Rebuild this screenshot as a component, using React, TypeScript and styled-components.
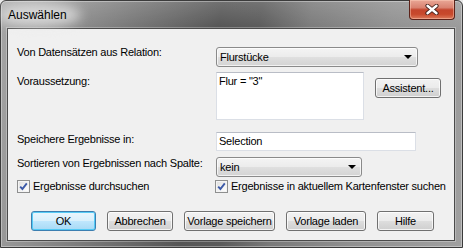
import React from "react";
import styled, { createGlobalStyle } from "styled-components";

const GlobalStyle = createGlobalStyle`
  html, body {
    margin: 0;
    padding: 0;
    background: #e8e8e8;
  }
  * {
    box-sizing: border-box;
  }
`;

const Window = styled.div`
  width: 463px;
  height: 248px;
  display: flex;
  flex-direction: column;
  padding: 0 7px 6px 6px;
  border: 1px solid #3b3b3b;
  border-radius: 6px 6px 0 0;
  background:
    linear-gradient(180deg, rgba(255, 255, 255, 0.16) 0, rgba(255, 255, 255, 0) 28px),
    linear-gradient(100deg, #a6a6a6 0%, #8f8f8f 14%, #707070 30%, #555 44%, #5a5a5a 52%, #7a7a7a 62%, #909090 78%, #a0a0a0 100%);
  box-shadow: inset 0 0 0 1px rgba(255, 255, 255, 0.35);
  font-family: "Liberation Sans", Arial, sans-serif;
  font-size: 11px;
  letter-spacing: -0.22px;
  color: #000;
`;

const TitleBar = styled.div`
  height: 27px;
  display: flex;
  align-items: center;
  justify-content: space-between;
`;

const Title = styled.span`
  position: relative;
  margin-left: 1px;
  font-size: 12px;
  line-height: 14px;
  letter-spacing: 0;
  color: #000;

  &::before {
    content: "";
    position: absolute;
    left: -10px;
    right: -14px;
    top: -5px;
    bottom: -5px;
    border-radius: 50%;
    background: rgba(235, 235, 235, 0.7);
    filter: blur(6px);
    z-index: 0;
  }

  span {
    position: relative;
  }
`;

const CloseButton = styled.div`
  align-self: flex-start;
  margin-top: -1px;
  width: 46px;
  height: 20px;
  display: flex;
  align-items: center;
  justify-content: center;
  border: 1px solid #5c2219;
  border-top: none;
  border-radius: 0 0 4px 4px;
  background: linear-gradient(180deg, #e9a796 0%, #d98270 40%, #c4452c 52%, #c8492c 75%, #dc7a5c 100%);
  box-shadow: inset 0 0 0 1px rgba(255, 210, 190, 0.45);
`;

const Client = styled.div`
  flex: 1;
  display: flex;
  flex-direction: column;
  padding: 18px 0 0 9px;
  background: #f0f0f0;
  border: 1px solid #4a4a4a;
  box-shadow: 0 0 0 1px rgba(255, 255, 255, 0.28);
`;

const Row = styled.div<{ $top: number }>`
  display: grid;
  grid-template-columns: 199px auto;
  align-items: start;
  margin-top: ${(p) => p.$top}px;
`;

const Label = styled.div<{ $offset: number }>`
  line-height: 13px;
  margin-top: ${(p) => p.$offset}px;
  white-space: nowrap;
`;

const Combo = styled.div<{ $width: number }>`
  position: relative;
  width: ${(p) => p.$width}px;
  height: 20px;
  display: flex;
  align-items: center;
  padding-left: 3px;
  border: 1px solid #8a8a8a;
  border-radius: 3px;
  background: linear-gradient(180deg, #f4f4f4 0%, #ececec 48%, #dfdfdf 52%, #d3d3d3 100%);
  box-shadow: inset 0 0 0 1px rgba(255, 255, 255, 0.7);
  line-height: 13px;
`;

const ComboArrow = styled.span`
  position: absolute;
  right: 5px;
  top: 7px;
  width: 0;
  height: 0;
  border-left: 4px solid transparent;
  border-right: 4px solid transparent;
  border-top: 4px solid #000;
`;

const FieldGroup = styled.div`
  display: flex;
  align-items: flex-start;
  gap: 11px;
`;

const TextArea = styled.div`
  width: 148px;
  height: 48px;
  padding: 2px 2px;
  background: #fff;
  border: 1px solid #dbdfe6;
  border-top-color: #b9bdc6;
  line-height: 13px;
`;

const TextBox = styled.div`
  width: 200px;
  height: 19px;
  padding: 2px 2px 0;
  background: #fff;
  border: 1px solid #dbdfe6;
  border-top-color: #b9bdc6;
  line-height: 13px;
`;

const Button = styled.div<{ $width: number; $default?: boolean; $top?: number }>`
  width: ${(p) => p.$width}px;
  height: 20px;
  margin-top: ${(p) => p.$top ?? 0}px;
  display: flex;
  align-items: center;
  justify-content: center;
  border: 1px solid ${(p) => (p.$default ? "#3c7fb1" : "#707070")};
  border-radius: 3px;
  background: ${(p) =>
    p.$default
      ? "linear-gradient(180deg, #eaf6fd 0%, #d9f0fc 48%, #bee6fd 52%, #a7d9f5 100%)"
      : "linear-gradient(180deg, #f2f2f2 0%, #ebebeb 48%, #dddddd 52%, #cfcfcf 100%)"};
  box-shadow: inset 0 0 0 1px
    ${(p) => (p.$default ? "rgba(72, 200, 245, 0.9)" : "rgba(255, 255, 255, 0.75)")};
  line-height: 13px;
  white-space: nowrap;
`;

const CheckRow = styled.div`
  display: grid;
  grid-template-columns: 198px auto;
  margin-top: 3px;
`;

const CheckItem = styled.div`
  display: flex;
  align-items: center;
  gap: 3px;
  line-height: 13px;
  white-space: nowrap;
`;

const Box = styled.span`
  width: 13px;
  height: 13px;
  display: flex;
  align-items: center;
  justify-content: center;
  border: 1px solid #8e8f8f;
  background: linear-gradient(135deg, #dcdcdc 0%, #f4f4f4 60%, #fff 100%);
  box-shadow: inset 0 0 0 1px #f4f4f4;
`;

const ButtonRow = styled.div`
  display: flex;
  gap: 11px;
  margin-top: 18px;
  padding-left: 14px;
`;

const Check = () => (
  <Box>
    <svg width="9" height="9" viewBox="0 0 9 9">
      <path d="M1.2 4.6 L3.4 7 L7.8 1.4" fill="none" stroke="#3c5aa8" strokeWidth="1.9" />
    </svg>
  </Box>
);

const CloseGlyph = () => (
  <svg width="14" height="11" viewBox="0 0 14 11">
    <path d="M2.5 1.8 L11.5 9.2 M11.5 1.8 L2.5 9.2" stroke="#43201a" strokeWidth="4.2" strokeLinecap="round" />
    <path d="M2.5 1.8 L11.5 9.2 M11.5 1.8 L2.5 9.2" stroke="#fff" strokeWidth="2.4" strokeLinecap="round" />
  </svg>
);

export default function App() {
  return (
    <>
      <GlobalStyle />
      <Window>
        <TitleBar>
          <Title>
            <span>Auswählen</span>
          </Title>
          <CloseButton>
            <CloseGlyph />
          </CloseButton>
        </TitleBar>
        <Client>
          <Row $top={0}>
            <Label $offset={-1}>Von Datensätzen aus Relation:</Label>
            <Combo $width={202}>
              Flurstücke
              <ComboArrow />
            </Combo>
          </Row>
          <Row $top={5}>
            <Label $offset={3}>Voraussetzung:</Label>
            <FieldGroup>
              <TextArea>Flur = "3"</TextArea>
              <Button $width={66} $top={6}>
                Assistent...
              </Button>
            </FieldGroup>
          </Row>
          <Row $top={12}>
            <Label $offset={1}>Speichere Ergebnisse in:</Label>
            <TextBox>Selection</TextBox>
          </Row>
          <Row $top={6}>
            <Label $offset={0}>Sortieren von Ergebnissen nach Spalte:</Label>
            <Combo $width={146}>
              kein
              <ComboArrow />
            </Combo>
          </Row>
          <CheckRow>
            <CheckItem>
              <Check />
              Ergebnisse durchsuchen
            </CheckItem>
            <CheckItem>
              <Check />
              Ergebnisse in aktuellem Kartenfenster suchen
            </CheckItem>
          </CheckRow>
          <ButtonRow>
            <Button $width={65} $default>
              OK
            </Button>
            <Button $width={66}>Abbrechen</Button>
            <Button $width={91}>Vorlage speichern</Button>
            <Button $width={80}>Vorlage laden</Button>
            <Button $width={57}>Hilfe</Button>
          </ButtonRow>
        </Client>
      </Window>
    </>
  );
}
